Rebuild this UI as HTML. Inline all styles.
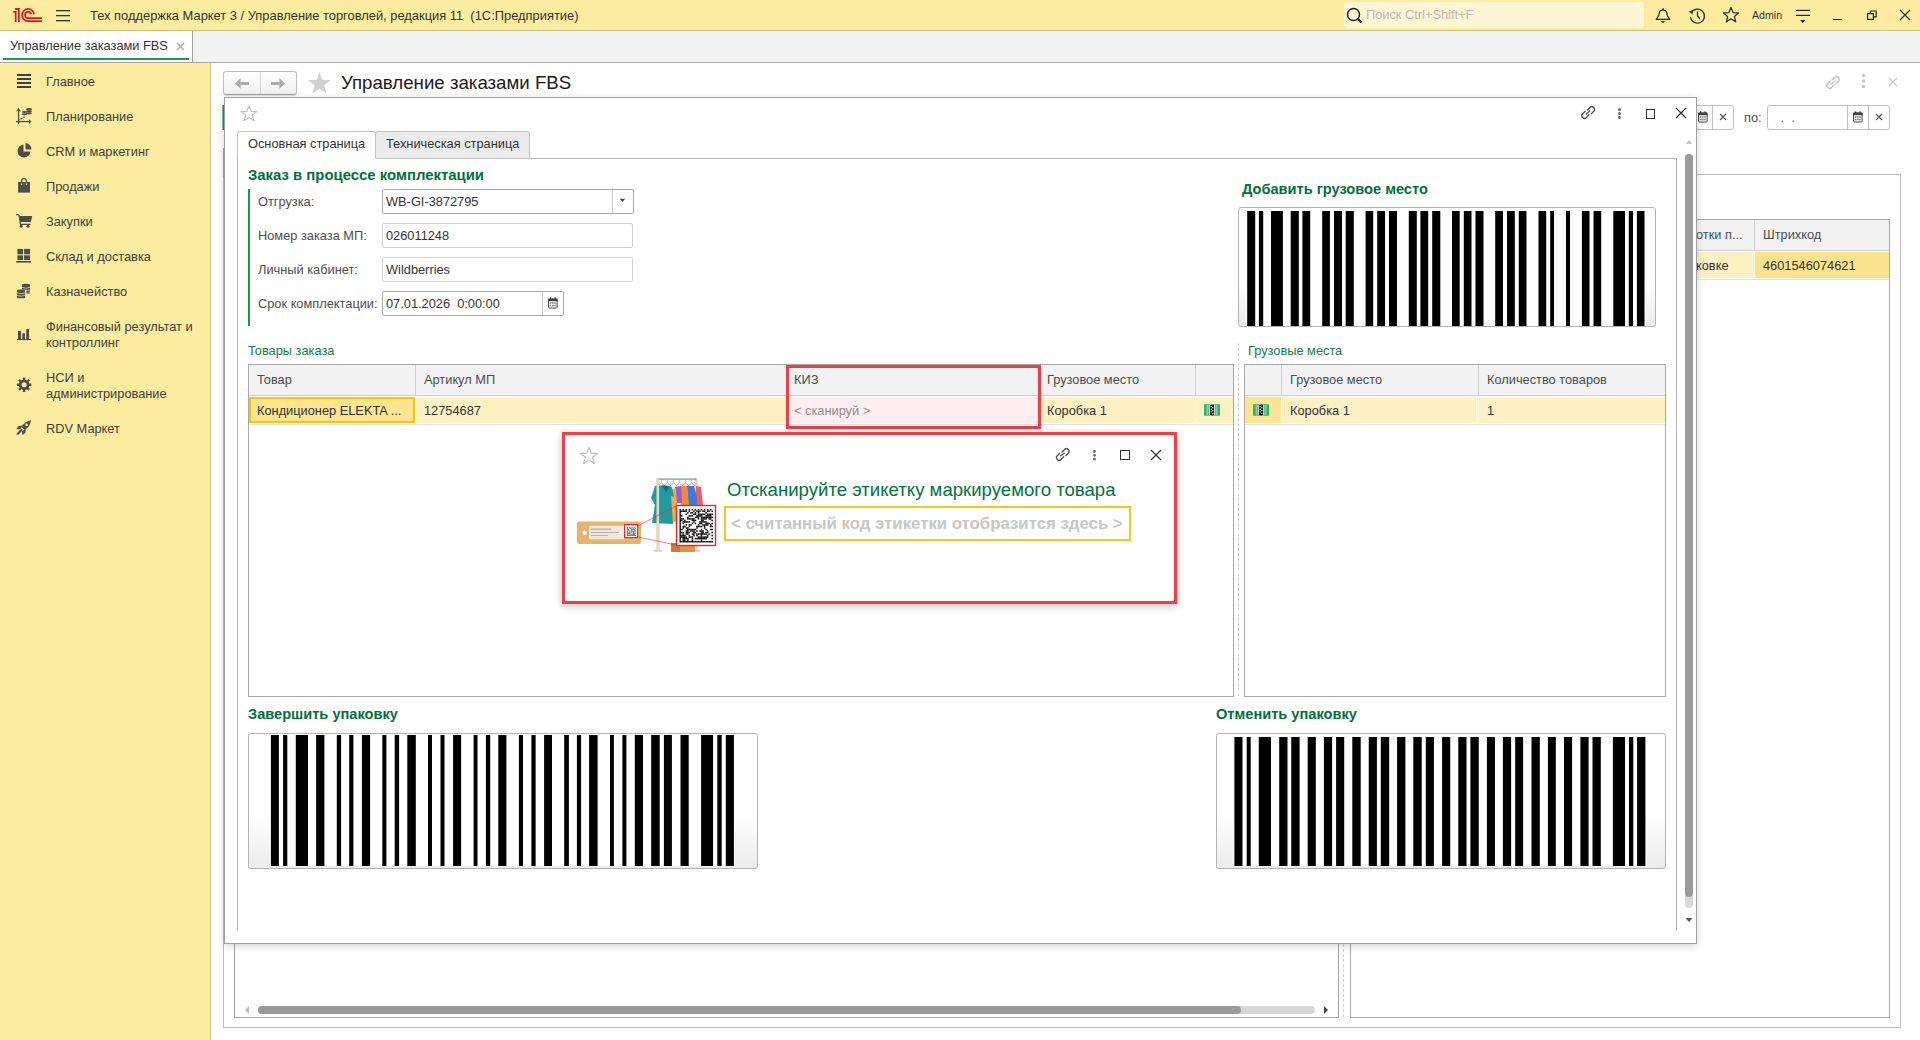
<!DOCTYPE html>
<html><head><meta charset="utf-8"><title>Управление заказами FBS</title>
<style>
*{box-sizing:border-box;margin:0;padding:0}
html,body{width:1920px;height:1040px;overflow:hidden;background:#fff}
body{position:relative;font-family:"Liberation Sans",sans-serif;font-size:12.8px;color:#4d4d4d}
.a{position:absolute}
.t{position:absolute;white-space:nowrap;line-height:16px}
</style></head><body>

<div class="a" style="left:0;top:0;width:1920px;height:31px;background:#fbec9f;border-bottom:1px solid #cdbf7a"></div>

<div class="a" style="left:0;top:31px;width:1920px;height:32px;background:#f2f2f2;border-bottom:1px solid #a8a8a8"></div>
<div class="a" style="left:0;top:31px;width:193px;height:31px;background:#fff;border-right:1px solid #a3a3a3"></div>
<div class="a" style="left:3px;top:58px;width:186px;height:2px;background:#1a9a48"></div>
<div class="t" style="left:10px;top:38px;color:#333">Управление заказами FBS</div>
<svg class="a" style="left:176px;top:42px" width="9" height="9" viewBox="0 0 9 9"><path d="M1 1 L8 8 M8 1 L1 8" stroke="#b0b0b0" stroke-width="1.6"/></svg>

<div class="a" style="left:0;top:63px;width:211px;height:977px;background:#fbec9f;border-right:1px solid #d2c585"></div>
<div class="t" style="left:46px;top:74px;color:#404040">Главное</div><div class="t" style="left:46px;top:109px;color:#404040">Планирование</div><div class="t" style="left:46px;top:144px;color:#404040">CRM и маркетинг</div><div class="t" style="left:46px;top:179px;color:#404040">Продажи</div><div class="t" style="left:46px;top:214px;color:#404040">Закупки</div><div class="t" style="left:46px;top:249px;color:#404040">Склад и доставка</div><div class="t" style="left:46px;top:284px;color:#404040">Казначейство</div><div class="t" style="left:46px;top:319px;color:#404040;line-height:16px">Финансовый результат и<br>контроллинг</div><div class="t" style="left:46px;top:370px;color:#404040;line-height:16px">НСИ и<br>администрирование</div><div class="t" style="left:46px;top:421px;color:#404040">RDV Маркет</div>
<div class="a" style="left:223px;top:174px;width:1678px;height:854px;border:1px solid #bdbdbd"></div>
<div class="a" style="left:223px;top:148px;width:1px;height:30px;background:#a8a8a8"></div>
<div class="a" style="left:223px;top:105px;width:1px;height:25px;background:#109a45;box-shadow:-0.5px 0 0 #109a45"></div>
<div class="a" style="left:234px;top:219px;width:1105px;height:799px;border:1px solid #a6a6a6"></div>
<div class="t" style="left:341px;top:72px;font-size:18.67px;line-height:22px;color:#1a1a1a">Управление заказами FBS</div>

<svg class="a" style="left:0;top:0" width="48" height="30" viewBox="0 0 48 30">
 <g fill="none" stroke="#d9161f" stroke-width="1.7">
  <path d="M13.2 11.85 H15.7 V22"/>
  <path d="M15 8.85 H18.9 V22"/>
  <path d="M34.1 14.3 A6.05 6.05 0 1 0 28.1 21.05 H41.9"/>
  <path d="M31.1 14.3 A3.08 3.08 0 1 0 28.1 18.05 H41.9"/>
 </g>
</svg>
<svg class="a" style="left:56px;top:9px" width="15" height="13" viewBox="0 0 15 13"><g fill="#333"><rect x="0" y="1" width="14" height="1.3"/><rect x="0" y="6" width="14" height="1.3"/><rect x="0" y="11" width="14" height="1.3"/></g></svg>
<div class="t" style="left:90px;top:8px;color:#333;font-size:12.9px">Тех поддержка Маркет 3 / Управление торговлей, редакция 11&nbsp; (1С:Предприятие)</div>
<div class="a" style="left:1344px;top:2px;width:300px;height:26px;background:#fdf5d3;border-radius:3px"></div>
<svg class="a" style="left:1346px;top:7px" width="18" height="18" viewBox="0 0 18 18"><circle cx="7.5" cy="7.5" r="6" fill="none" stroke="#222" stroke-width="1.5"/><path d="M11.8 11.8 L15.5 15.5" stroke="#222" stroke-width="2.2"/></svg>
<div class="t" style="left:1366px;top:7px;color:#b9b9b9;font-size:12.8px">Поиск Ctrl+Shift+F</div>
<svg class="a" style="left:1654px;top:6px" width="18" height="18" viewBox="1654 6 18 18"><path d="M1656.3 19.4 H1669.7 L1667.2 15.2 L1666.4 11.6 Q1665.8 10.1 1663 10.1 Q1660.2 10.1 1659.6 11.6 L1658.8 15.2Z" fill="none" stroke="#222" stroke-width="1.2" stroke-linejoin="round"/><circle cx="1663" cy="9.2" r="0.9" fill="#222"/><path d="M1660.5 21.2 H1665.5 L1663 22.9Z" fill="#222"/></svg>
<svg class="a" style="left:1688px;top:7px" width="18" height="18" viewBox="0 0 18 18"><path d="M3.2 6 A7 7 0 1 1 2.5 10" fill="none" stroke="#333" stroke-width="1.3"/><path d="M1 4.5 L4.5 7.5 L5 3Z" fill="#333"/><path d="M9.5 4.5 V9 L12 12" fill="none" stroke="#333" stroke-width="1.3"/></svg>
<svg class="a" style="left:1722px;top:6px" width="18" height="18" viewBox="0 0 18 18"><path d="M9 1.5 L11.1 6.6 L16.5 7 L12.4 10.5 L13.7 15.8 L9 12.9 L4.3 15.8 L5.6 10.5 L1.5 7 L6.9 6.6Z" fill="none" stroke="#333" stroke-width="1.3" stroke-linejoin="round"/></svg>
<div class="t" style="left:1752px;top:7px;color:#333;font-size:10.6px">Admin</div>
<svg class="a" style="left:1794px;top:6px" width="18" height="20" viewBox="1794 6 18 20"><g fill="#222"><rect x="1796" y="9.8" width="14" height="1.2"/><rect x="1796" y="14.8" width="14" height="1.2"/><path d="M1800 20 H1805.6 L1802.8 23.1Z"/></g></svg>
<div class="a" style="left:1833px;top:19px;width:9px;height:1.2px;background:#222"></div>
<svg class="a" style="left:1865px;top:9px" width="14" height="13" viewBox="1865 9 14 13"><g fill="none" stroke="#222" stroke-width="1.2"><rect x="1867.6" y="13.6" width="5.8" height="5.8"/><path d="M1870.4 13.6 V11 H1876.2 V16.8 H1873.4"/></g></svg>
<svg class="a" style="left:1899px;top:9px" width="12" height="12" viewBox="0 0 12 12"><path d="M1 1 L11 11 M11 1 L1 11" stroke="#333" stroke-width="1.3"/></svg>

<svg class="a" style="left:17px;top:74px" width="14" height="14" viewBox="0 0 14 14"><g fill="#3d3f46"><rect x="0" y="0" width="14" height="2"/><rect x="0" y="4" width="14" height="2"/><rect x="0" y="8" width="14" height="2"/><rect x="0" y="12" width="14" height="2"/></g></svg>
<svg class="a" style="left:15px;top:106px" width="18" height="19" viewBox="15 106 18 19"><g fill="#4d4d4d"><rect x="17.9" y="109.5" width="1.3" height="14.5"/><path d="M16.2 111.2 L18.55 108 L20.9 111.2Z"/><rect x="16" y="120.9" width="13.5" height="1.3"/><path d="M28.8 119.2 L31.6 121.55 L28.8 123.9Z"/><ellipse cx="29" cy="109.2" rx="3" ry="1.2"/><ellipse cx="29" cy="111.3" rx="3" ry="1.1"/><ellipse cx="29" cy="113.3" rx="3" ry="1.1"/><ellipse cx="24.6" cy="112" rx="2.7" ry="1.1"/><ellipse cx="24.6" cy="114.3" rx="2.7" ry="1.1"/></g><path d="M19.5 119.6 L21 118.4 L22 118.8 L23.3 117.3 L25 117.2" fill="none" stroke="#4d4d4d" stroke-width="0.9"/></svg>
<svg class="a" style="left:17px;top:143px" width="15" height="15" viewBox="0 0 15 15"><path d="M6.5 1.5 A6.5 6.5 0 1 0 13.5 8.5 H6.5Z" fill="#4d4d4d"/><path d="M8.5 0 V6.5 H14.5 A6.5 6.5 0 0 0 8.5 0Z" fill="#4d4d4d"/></svg>
<svg class="a" style="left:15px;top:176px" width="18" height="18" viewBox="15 176 18 18"><rect x="18.1" y="182" width="11.9" height="10.6" fill="#4d4d4d"/><path d="M21.6 184.5 V181 A2.4 2.4 0 0 1 26.4 181 V184.5" fill="none" stroke="#4d4d4d" stroke-width="1.3"/><rect x="20.9" y="183.4" width="1.4" height="1.4" fill="#fbec9f"/><rect x="25.7" y="183.4" width="1.4" height="1.4" fill="#fbec9f"/></svg>
<svg class="a" style="left:15px;top:212px" width="18" height="17" viewBox="15 212 18 17"><path d="M16 214.5 H18.3 L19.5 216" fill="none" stroke="#4d4d4d" stroke-width="1.2"/><path d="M18.8 216 H32.2 L30.8 222 H20.2Z" fill="#4d4d4d"/><path d="M19.2 216 L20.6 224.3 H30.5" fill="none" stroke="#4d4d4d" stroke-width="1.3"/><circle cx="21.1" cy="226.3" r="1.5" fill="#4d4d4d"/><circle cx="28" cy="226.3" r="1.5" fill="#4d4d4d"/></svg>
<svg class="a" style="left:15px;top:247px" width="18" height="17" viewBox="15 247 18 17"><g fill="#4d4d4d"><rect x="17.4" y="248.9" width="5.7" height="5.4"/><rect x="24.1" y="248.9" width="5.9" height="5.4"/><rect x="17.4" y="255.3" width="5.7" height="4.8"/><rect x="24.1" y="255.3" width="5.9" height="4.8"/><rect x="16.2" y="261" width="14.8" height="1.6"/></g></svg>
<svg class="a" style="left:15px;top:282px" width="18" height="18" viewBox="15 282 18 18"><g fill="#4d4d4d"><ellipse cx="26" cy="285" rx="4" ry="1.2"/><rect x="22" y="285" width="8" height="9" rx="1"/></g><g fill="none" stroke="#fbec9f" stroke-width="0.7"><path d="M22 287.4 Q26 289 30 287.4 M22 290 Q26 291.6 30 290 M22 292.6 Q26 294.2 30 292.6"/></g><path d="M21 289.8 H26.3 V298.3 H16.6 V291.2Z" fill="#fbec9f"/><g fill="#4d4d4d"><ellipse cx="21" cy="290.8" rx="4.1" ry="1.2"/><rect x="16.9" y="290.8" width="8.2" height="7.4" rx="1"/></g><g fill="none" stroke="#fbec9f" stroke-width="0.7"><path d="M16.9 292.9 Q21 294.5 25.1 292.9 M16.9 295.4 Q21 297 25.1 295.4"/></g></svg>
<svg class="a" style="left:15px;top:327px" width="18" height="14" viewBox="15 327 18 14"><g fill="#4d4d4d"><rect x="18" y="330.9" width="3.1" height="8.5"/><rect x="22.3" y="333.2" width="2.7" height="6.2"/><rect x="26.2" y="329.1" width="2.8" height="10.3"/><rect x="17" y="338.9" width="14" height="1.2"/></g></svg>
<svg class="a" style="left:15px;top:376px" width="18" height="18" viewBox="15 376 18 18"><g fill="#4d4d4d"><circle cx="24.1" cy="384.8" r="5.3"/><g stroke="#4d4d4d" stroke-width="2.4"><path d="M24.1 377.6 V392 M16.9 384.8 H31.3"/><path d="M19 379.7 L29.2 389.9 M29.2 379.7 L19 389.9" stroke-width="2.2"/></g></g><circle cx="24.1" cy="384.8" r="2.5" fill="#fbec9f"/></svg>
<svg class="a" style="left:15px;top:418px" width="18" height="19" viewBox="15 418 18 19"><g fill="#4d4d4d"><path d="M31.1 420.2 C27 421 23.5 423.2 21.3 426.8 L24.6 430.1 C28.2 427.9 30.4 424.4 31.1 420.2Z"/><path d="M22.3 425.6 L18.5 426.1 L16.4 429.2 L20.3 429.3Z"/><path d="M25.8 429.1 L25.3 432.9 L22.2 435 L22.1 431.1Z"/><path d="M21.4 428.6 L22.8 430 L18.6 434.6 L16.6 435.1 L17 433.1Z"/></g><circle cx="26.6" cy="424.8" r="1.3" fill="#fbec9f"/></svg>

<div class="a" style="left:223px;top:71px;width:74px;height:24px;border:1px solid #bdbdbd;border-bottom-color:#9e9e9e;border-radius:3px;background:linear-gradient(#fff,#f0f0f0);box-shadow:0 1px 1px rgba(0,0,0,.12)"></div>
<div class="a" style="left:260px;top:72px;width:1px;height:22px;background:#d5d5d5"></div>
<svg class="a" style="left:235px;top:78px" width="15" height="12" viewBox="0 0 15 12"><path d="M0 5.4 L5.6 0 V3.9 H14 V6.9 H5.6 V10.8Z" fill="#ababab"/></svg>
<svg class="a" style="left:271px;top:78px" width="15" height="12" viewBox="0 0 15 12"><path d="M14 5.4 L8.4 0 V3.9 H0 V6.9 H8.4 V10.8Z" fill="#ababab"/></svg>
<svg class="a" style="left:307px;top:71px" width="25" height="24" viewBox="0 0 25 24"><path d="M12.4 1 L15.3 9.1 H24 L17.1 14.3 L19.6 22.6 L12.4 17.4 L5.2 22.6 L7.7 14.3 L0.8 9.1 H9.5Z" fill="#cfd0d2"/></svg>
<svg class="a" style="left:1824px;top:74px" width="18" height="17" viewBox="0 0 18 17"><g fill="none" stroke="#c4c4c4" stroke-width="1.4"><path d="M7.5 6.5 L10.5 3.5 A2.6 2.6 0 0 1 14.3 7.3 L11.5 10"/><path d="M10.5 10.5 L7.5 13.5 A2.6 2.6 0 0 1 3.7 9.7 L6.5 7"/><path d="M6.8 10.2 L11.2 6.8"/></g></svg>
<svg class="a" style="left:1861px;top:73px" width="5" height="16" viewBox="0 0 5 16"><g fill="#c4c4c4"><circle cx="2.5" cy="2.5" r="1.7"/><circle cx="2.5" cy="8" r="1.7"/><circle cx="2.5" cy="13.5" r="1.7"/></g></svg>
<svg class="a" style="left:1888px;top:77px" width="10" height="10" viewBox="0 0 10 10"><path d="M1 1 L9 9 M9 1 L1 9" stroke="#c4c4c4" stroke-width="1.2"/></svg>
<div class="a" style="left:1690px;top:105px;width:44px;height:25px;border:1px solid #bfbfbf;border-radius:0 3px 3px 0;background:#fff"></div>
<div class="a" style="left:1712px;top:105px;width:1px;height:25px;background:#bfbfbf"></div>
<div class="t" style="left:1744px;top:110px;color:#4d4d4d;font-size:12.8px">по:</div>
<div class="a" style="left:1767px;top:105px;width:123px;height:25px;border:1px solid #bfbfbf;border-radius:3px;background:#fff"></div>
<div class="a" style="left:1847px;top:105px;width:1px;height:25px;background:#bfbfbf"></div>
<div class="a" style="left:1868px;top:105px;width:1px;height:25px;background:#bfbfbf"></div>
<div class="t" style="left:1777px;top:110px;color:#4d4d4d;font-size:12.8px">&nbsp;.&nbsp; .</div>
<svg class="a" style="left:1698px;top:111px" width="10" height="12" viewBox="0 0 10 12"><rect x="0.5" y="2" width="8.6" height="9" rx="0.8" fill="#fff" stroke="#444" stroke-width="1"/><rect x="0" y="1.6" width="9.6" height="2.6" fill="#444"/><rect x="2" y="0.3" width="1.3" height="2" fill="#444"/><rect x="6.3" y="0.3" width="1.3" height="2" fill="#444"/><g fill="#777"><rect x="1.8" y="5.3" width="1.6" height="1.5"/><rect x="4" y="5.3" width="1.6" height="1.5"/><rect x="6.2" y="5.3" width="1.6" height="1.5"/><rect x="1.8" y="7.8" width="1.6" height="1.5"/><rect x="4" y="7.8" width="1.6" height="1.5"/><rect x="6.2" y="7.8" width="1.6" height="1.5"/></g></svg>
<svg class="a" style="left:1853px;top:111px" width="10" height="12" viewBox="0 0 10 12"><rect x="0.5" y="2" width="8.6" height="9" rx="0.8" fill="#fff" stroke="#444" stroke-width="1"/><rect x="0" y="1.6" width="9.6" height="2.6" fill="#444"/><rect x="2" y="0.3" width="1.3" height="2" fill="#444"/><rect x="6.3" y="0.3" width="1.3" height="2" fill="#444"/><g fill="#777"><rect x="1.8" y="5.3" width="1.6" height="1.5"/><rect x="4" y="5.3" width="1.6" height="1.5"/><rect x="6.2" y="5.3" width="1.6" height="1.5"/><rect x="1.8" y="7.8" width="1.6" height="1.5"/><rect x="4" y="7.8" width="1.6" height="1.5"/><rect x="6.2" y="7.8" width="1.6" height="1.5"/></g></svg>
<svg class="a" style="left:1719px;top:113px" width="8" height="8" viewBox="0 0 8 8"><path d="M1 1 L7 7 M7 1 L1 7" stroke="#555" stroke-width="1.2"/></svg>
<svg class="a" style="left:1875px;top:113px" width="8" height="8" viewBox="0 0 8 8"><path d="M1 1 L7 7 M7 1 L1 7" stroke="#555" stroke-width="1.2"/></svg>
<div class="a" style="left:1350px;top:219px;width:540px;height:799px;border:1px solid #a6a6a6;background:#fff"></div>
<div class="a" style="left:1351px;top:220px;width:538px;height:31px;background:#f2f2f2;border-bottom:1px solid #cdcdcd"></div>
<div class="a" style="left:1351px;top:252px;width:403px;height:26px;background:#fdf1c4"></div>
<div class="a" style="left:1755px;top:252px;width:134px;height:26px;background:#fbe38e"></div>
<div class="a" style="left:1351px;top:279px;width:538px;height:1px;background:#e3e3e3"></div>
<div class="a" style="left:1754px;top:220px;width:1px;height:30px;background:#cfcfcf"></div>
<div class="t" style="left:1696px;top:227px;font-size:12.8px;color:#4d4d4d">отки п...</div>
<div class="t" style="left:1763px;top:227px;font-size:12.8px;color:#4d4d4d">Штрихкод</div>
<div class="t" style="left:1696px;top:258px;font-size:12.8px;color:#333">ковке</div>
<div class="t" style="left:1763px;top:258px;font-size:12.8px;color:#333">4601546074621</div>
<div class="a" style="left:1343px;top:220px;width:1px;height:797px;border-left:1px dashed #d0d0d0"></div>
<svg class="a" style="left:244px;top:1005px" width="6" height="10" viewBox="0 0 6 10"><path d="M5 1 L1 5 L5 9Z" fill="#bbb"/></svg>
<div class="a" style="left:258px;top:1006px;width:1057px;height:8px;border-radius:4px;background:#d6d6d6"></div>
<div class="a" style="left:258px;top:1006px;width:983px;height:8px;border-radius:4px;background:#9a9a9a"></div>
<svg class="a" style="left:1323px;top:1005px" width="6" height="10" viewBox="0 0 6 10"><path d="M1 1 L5 5 L1 9Z" fill="#444"/></svg>

<div class="a" style="left:224px;top:97px;width:1473px;height:847px;background:#fff;border:1px solid #a0a0a0;box-shadow:0 2px 8px rgba(0,0,0,.18)"></div>

<svg class="a" style="left:240px;top:105px" width="18" height="17" viewBox="0 0 18 17"><path d="M9 1 L11.1 6.4 L16.8 6.6 L12.3 10.1 L13.9 15.7 L9 12.5 L4.1 15.7 L5.7 10.1 L1.2 6.6 L6.9 6.4Z" fill="none" stroke="#bdbdbd" stroke-width="1.1" stroke-linejoin="round"/></svg>
<svg class="a" style="left:1579px;top:104px" width="18" height="17" viewBox="0 0 18 17"><g fill="none" stroke="#4d4d4d" stroke-width="1.3"><path d="M8 6.5 L11 3.5 A2.6 2.6 0 0 1 14.8 7.3 L12 10"/><path d="M10.5 10.5 L7.5 13.5 A2.6 2.6 0 0 1 3.7 9.7 L6.5 7"/><path d="M6.8 10.2 L11.2 6.8"/></g></svg>
<svg class="a" style="left:1617px;top:106px" width="5" height="15" viewBox="0 0 5 15"><g fill="#6a6a6a"><circle cx="2.5" cy="3.5" r="1.5"/><circle cx="2.5" cy="7.5" r="1.5"/><circle cx="2.5" cy="11.5" r="1.5"/></g></svg>
<div class="a" style="left:1646px;top:109px;width:9px;height:9.5px;border:1.3px solid #333"></div>
<svg class="a" style="left:1675px;top:107px" width="12" height="12" viewBox="0 0 12 12"><path d="M1 1 L11 11 M11 1 L1 11" stroke="#333" stroke-width="1.2"/></svg>
<!-- tab page frame -->
<div class="a" style="left:237px;top:158px;width:1440px;height:773px;border:1px solid #b4b4b4;border-bottom:none"></div>
<div class="a" style="left:237px;top:131px;width:139px;height:28px;background:#fff;border:1px solid #c4c4c4;border-bottom:none;border-radius:3px 3px 0 0"></div>
<div class="a" style="left:375px;top:131px;width:155px;height:28px;background:#ebebeb;border:1px solid #c4c4c4;border-radius:3px 3px 0 0"></div>
<div class="t" style="left:248px;top:136px;color:#333">Основная страница</div>
<div class="t" style="left:386px;top:136px;color:#333">Техническая страница</div>
<!-- scrollbar -->
<svg class="a" style="left:1685px;top:139px" width="8" height="6" viewBox="0 0 8 6"><path d="M0.5 5 L4 1 L7.5 5Z" fill="#c8c8c8"/></svg>
<div class="a" style="left:1685px;top:154px;width:8px;height:754px;border-radius:4px;background:#d9d9d9"></div>
<div class="a" style="left:1685px;top:154px;width:8px;height:743px;border-radius:4px;background:#9a9a9a"></div>
<svg class="a" style="left:1685px;top:917px" width="8" height="6" viewBox="0 0 8 6"><path d="M0.5 1 L4 5 L7.5 1Z" fill="#555"/></svg>

<div class="t" style="left:248px;top:166px;color:#00703c;font-weight:bold;font-size:14.9px;line-height:18px">Заказ в процессе комплектации</div>
<div class="a" style="left:248px;top:189px;width:2px;height:137px;background:#1a9a48"></div>
<div class="t" style="left:258px;top:194px">Отгрузка:</div>
<div class="t" style="left:258px;top:228px">Номер заказа МП:</div>
<div class="t" style="left:258px;top:262px">Личный кабинет:</div>
<div class="t" style="left:258px;top:296px">Срок комплектации:</div>
<div class="a" style="left:382px;top:189px;width:252px;height:25px;border:1px solid #a9a9a9;border-radius:2px;background:#fff"></div>
<div class="a" style="left:612px;top:190px;width:1px;height:23px;background:#c8c8c8"></div>
<svg class="a" style="left:619px;top:198px" width="7" height="5" viewBox="0 0 7 5"><path d="M0.8 0.8 H6.2 L3.5 4Z" fill="#444"/></svg>
<div class="a" style="left:382px;top:223px;width:251px;height:25px;border:1px solid #d0d0d0;border-radius:2px;background:#fff"></div>
<div class="a" style="left:382px;top:257px;width:251px;height:25px;border:1px solid #d0d0d0;border-radius:2px;background:#fff"></div>
<div class="a" style="left:382px;top:291px;width:182px;height:25px;border:1px solid #a9a9a9;border-radius:2px;background:#fff"></div>
<div class="a" style="left:542px;top:292px;width:1px;height:23px;background:#c8c8c8"></div>
<svg class="a" style="left:548px;top:297px" width="10" height="12" viewBox="0 0 10 12"><rect x="0.5" y="2" width="8.6" height="9" rx="0.8" fill="#fff" stroke="#444" stroke-width="1"/><rect x="0" y="1.6" width="9.6" height="2.6" fill="#444"/><rect x="2" y="0.3" width="1.3" height="2" fill="#444"/><rect x="6.3" y="0.3" width="1.3" height="2" fill="#444"/><g fill="#777"><rect x="1.8" y="5.3" width="1.6" height="1.5"/><rect x="4" y="5.3" width="1.6" height="1.5"/><rect x="6.2" y="5.3" width="1.6" height="1.5"/><rect x="1.8" y="7.8" width="1.6" height="1.5"/><rect x="4" y="7.8" width="1.6" height="1.5"/><rect x="6.2" y="7.8" width="1.6" height="1.5"/></g></svg>
<div class="t" style="left:386px;top:194px;color:#333">WB-GI-3872795</div>
<div class="t" style="left:386px;top:228px;color:#333">026011248</div>
<div class="t" style="left:386px;top:262px;color:#333">Wildberries</div>
<div class="t" style="left:386px;top:296px;color:#333">07.01.2026&nbsp; 0:00:00</div>

<div class="t" style="left:1242px;top:180px;color:#00703c;font-weight:bold;font-size:14.6px;line-height:18px">Добавить грузовое место</div>
<div class="a" style="left:1238px;top:207px;width:418px;height:120px;border:1px solid #b4b4b4;border-radius:3px;background:linear-gradient(to bottom,#fff 60%,#ececec)"></div>
<svg class="a" style="left:1238px;top:207px" width="418" height="120" viewBox="0 0 418 120"><rect x="8.20" y="4.00" width="399.30" height="115.00" fill="#fff"/><g fill="#000"><rect x="9.20" y="4.00" width="8.00" height="115.00"/><rect x="20.90" y="4.00" width="4.30" height="115.00"/><rect x="33.00" y="4.00" width="11.90" height="115.00"/><rect x="52.70" y="4.00" width="8.10" height="115.00"/><rect x="64.40" y="4.00" width="7.80" height="115.00"/><rect x="84.20" y="4.00" width="7.70" height="115.00"/><rect x="96.00" y="4.00" width="8.00" height="115.00"/><rect x="107.70" y="4.00" width="8.10" height="115.00"/><rect x="127.60" y="4.00" width="7.60" height="115.00"/><rect x="139.20" y="4.00" width="7.80" height="115.00"/><rect x="151.00" y="4.00" width="8.00" height="115.00"/><rect x="170.80" y="4.00" width="8.00" height="115.00"/><rect x="182.40" y="4.00" width="7.80" height="115.00"/><rect x="194.20" y="4.00" width="8.10" height="115.00"/><rect x="214.00" y="4.00" width="7.70" height="115.00"/><rect x="225.80" y="4.00" width="7.70" height="115.00"/><rect x="237.50" y="4.00" width="8.00" height="115.00"/><rect x="257.20" y="4.00" width="7.80" height="115.00"/><rect x="269.00" y="4.00" width="7.80" height="115.00"/><rect x="280.80" y="4.00" width="7.70" height="115.00"/><rect x="300.50" y="4.00" width="7.70" height="115.00"/><rect x="312.20" y="4.00" width="3.80" height="115.00"/><rect x="328.00" y="4.00" width="4.00" height="115.00"/><rect x="343.90" y="4.00" width="7.60" height="115.00"/><rect x="355.50" y="4.00" width="7.70" height="115.00"/><rect x="375.30" y="4.00" width="11.70" height="115.00"/><rect x="390.80" y="4.00" width="4.20" height="115.00"/><rect x="398.90" y="4.00" width="7.60" height="115.00"/></g></svg>
<div class="t" style="left:248px;top:343px;color:#197a48">Товары заказа</div>
<div class="a" style="left:248px;top:364px;width:986px;height:333px;border:1px solid #a9a9a9;background:#fff"></div>
<div class="a" style="left:249px;top:365px;width:984px;height:30px;background:#f2f2f2"></div>
<div class="a" style="left:249px;top:395px;width:984px;height:1px;background:#cdcdcd"></div>
<div class="a" style="left:249px;top:397px;width:984px;height:26px;background:#fdf1c4"></div>
<div class="a" style="left:249px;top:424px;width:984px;height:1px;background:#e3e3e3"></div>
<div class="a" style="left:249px;top:397px;width:166px;height:26px;background:#fde591;border:2px solid #f7c40f"></div>
<div class="a" style="left:415px;top:397px;width:1px;height:26px;background:#fff"></div>
<div class="a" style="left:786px;top:397px;width:253px;height:26px;background:#ffeef0"></div>
<div class="a" style="left:1195px;top:397px;width:1px;height:26px;background:#fff"></div>
<div class="a" style="left:415px;top:365px;width:1px;height:30px;background:#cfcfcf"></div>
<div class="a" style="left:1038px;top:365px;width:1px;height:30px;background:#cfcfcf"></div>
<div class="a" style="left:1195px;top:365px;width:1px;height:30px;background:#cfcfcf"></div>
<div class="t" style="left:257px;top:372px">Товар</div>
<div class="t" style="left:424px;top:372px">Артикул МП</div>
<div class="t" style="left:794px;top:372px">КИЗ</div>
<div class="t" style="left:1047px;top:372px">Грузовое место</div>
<div class="t" style="left:257px;top:403px;color:#333">Кондиционер ELEKTA ...</div>
<div class="t" style="left:424px;top:403px;color:#333">12754687</div>
<div class="t" style="left:794px;top:403px;color:#8c8c8c">&lt; сканируй &gt;</div>
<div class="t" style="left:1047px;top:403px;color:#333">Коробка 1</div>
<svg class="a" style="left:1204px;top:404px" width="16" height="12" viewBox="0 0 16 12"><path d="M0 0.6 L1 0 L2 0.6 L3 0 L4 0.6 L5 0 L6 0.6 L7 0 L8 0.6 L9 0 L10 0.6 L11 0 L12 0.6 L13 0 L14 0.6 L15 0 L16 0.6 V11.4 L15 12 L14 11.4 L13 12 L12 11.4 L11 12 L10 11.4 L9 12 L8 11.4 L7 12 L6 11.4 L5 12 L4 11.4 L3 12 L2 11.4 L1 12 L0 11.4Z" fill="#2eb36a"/><rect x="2.5" y="1" width="2" height="10" fill="#7dd3a2"/><rect x="11.5" y="1" width="2" height="10" fill="#7dd3a2"/><rect x="5" y="0.8" width="6" height="10.4" fill="#fff"/><rect x="5.8" y="0.8" width="4.4" height="10.4" fill="#111"/><g fill="#fff"><rect x="6.6" y="2" width="1.2" height="1.2"/><rect x="8.2" y="3.2" width="1.2" height="1.2"/><rect x="6.6" y="4.6" width="1.2" height="1.2"/><rect x="8.2" y="6" width="1.2" height="1.2"/><rect x="6.6" y="7.4" width="1.2" height="1.2"/><rect x="8.2" y="8.8" width="1.2" height="1.2"/></g></svg>
<div class="a" style="left:786px;top:365px;width:255px;height:64px;border:3px solid #ef3e46"></div>
<div class="a" style="left:1238px;top:343px;width:1px;height:353px;border-left:1px dashed #cfcfcf"></div>
<div class="t" style="left:1248px;top:343px;color:#197a48">Грузовые места</div>
<div class="a" style="left:1244px;top:364px;width:422px;height:333px;border:1px solid #a9a9a9;background:#fff"></div>
<div class="a" style="left:1245px;top:365px;width:420px;height:30px;background:#f2f2f2"></div>
<div class="a" style="left:1245px;top:395px;width:420px;height:1px;background:#cdcdcd"></div>
<div class="a" style="left:1245px;top:397px;width:420px;height:26px;background:#fdf1c4"></div>
<div class="a" style="left:1245px;top:397px;width:36px;height:26px;background:#fde591"></div>
<div class="a" style="left:1245px;top:424px;width:420px;height:1px;background:#e3e3e3"></div>
<div class="a" style="left:1281px;top:365px;width:1px;height:30px;background:#cfcfcf"></div>
<div class="a" style="left:1478px;top:365px;width:1px;height:30px;background:#cfcfcf"></div>
<div class="a" style="left:1281px;top:397px;width:1px;height:26px;background:#fff"></div>
<div class="a" style="left:1478px;top:397px;width:1px;height:26px;background:#fff"></div>
<div class="t" style="left:1290px;top:372px">Грузовое место</div>
<div class="t" style="left:1487px;top:372px">Количество товаров</div>
<div class="t" style="left:1290px;top:403px;color:#333">Коробка 1</div>
<div class="t" style="left:1487px;top:403px;color:#333">1</div>
<svg class="a" style="left:1253px;top:404px" width="16" height="12" viewBox="0 0 16 12"><path d="M0 0.6 L1 0 L2 0.6 L3 0 L4 0.6 L5 0 L6 0.6 L7 0 L8 0.6 L9 0 L10 0.6 L11 0 L12 0.6 L13 0 L14 0.6 L15 0 L16 0.6 V11.4 L15 12 L14 11.4 L13 12 L12 11.4 L11 12 L10 11.4 L9 12 L8 11.4 L7 12 L6 11.4 L5 12 L4 11.4 L3 12 L2 11.4 L1 12 L0 11.4Z" fill="#2eb36a"/><rect x="2.5" y="1" width="2" height="10" fill="#7dd3a2"/><rect x="11.5" y="1" width="2" height="10" fill="#7dd3a2"/><rect x="5" y="0.8" width="6" height="10.4" fill="#fff"/><rect x="5.8" y="0.8" width="4.4" height="10.4" fill="#111"/><g fill="#fff"><rect x="6.6" y="2" width="1.2" height="1.2"/><rect x="8.2" y="3.2" width="1.2" height="1.2"/><rect x="6.6" y="4.6" width="1.2" height="1.2"/><rect x="8.2" y="6" width="1.2" height="1.2"/><rect x="6.6" y="7.4" width="1.2" height="1.2"/><rect x="8.2" y="8.8" width="1.2" height="1.2"/></g></svg>

<div class="t" style="left:248px;top:705px;color:#00703c;font-weight:bold;font-size:14.6px;line-height:18px">Завершить упаковку</div>
<div class="a" style="left:248px;top:733px;width:510px;height:136px;border:1px solid #b4b4b4;border-radius:3px;background:linear-gradient(to bottom,#fff 60%,#ececec)"></div>
<div class="t" style="left:1216px;top:705px;color:#00703c;font-weight:bold;font-size:14.6px;line-height:18px">Отменить упаковку</div>
<div class="a" style="left:1216px;top:733px;width:450px;height:136px;border:1px solid #b4b4b4;border-radius:3px;background:linear-gradient(to bottom,#fff 60%,#ececec)"></div>
<svg class="a" style="left:248px;top:733px" width="510" height="136" viewBox="0 0 510 136"><rect x="21.90" y="2.00" width="465.00" height="131.00" fill="#fff"/><g fill="#000"><rect x="22.90" y="2.00" width="8.00" height="131.00"/><rect x="35.10" y="2.00" width="4.20" height="131.00"/><rect x="47.80" y="2.00" width="12.20" height="131.00"/><rect x="68.10" y="2.00" width="8.30" height="131.00"/><rect x="88.80" y="2.00" width="4.30" height="131.00"/><rect x="101.20" y="2.00" width="4.20" height="131.00"/><rect x="113.90" y="2.00" width="8.20" height="131.00"/><rect x="134.30" y="2.00" width="4.10" height="131.00"/><rect x="146.70" y="2.00" width="4.40" height="131.00"/><rect x="159.30" y="2.00" width="8.50" height="131.00"/><rect x="180.00" y="2.00" width="4.00" height="131.00"/><rect x="192.50" y="2.00" width="4.00" height="131.00"/><rect x="205.10" y="2.00" width="8.00" height="131.00"/><rect x="225.60" y="2.00" width="3.90" height="131.00"/><rect x="237.90" y="2.00" width="4.30" height="131.00"/><rect x="250.30" y="2.00" width="8.10" height="131.00"/><rect x="270.90" y="2.00" width="4.10" height="131.00"/><rect x="283.40" y="2.00" width="4.20" height="131.00"/><rect x="296.10" y="2.00" width="7.90" height="131.00"/><rect x="316.20" y="2.00" width="4.70" height="131.00"/><rect x="328.90" y="2.00" width="4.20" height="131.00"/><rect x="341.10" y="2.00" width="8.50" height="131.00"/><rect x="362.00" y="2.00" width="3.90" height="131.00"/><rect x="374.40" y="2.00" width="4.00" height="131.00"/><rect x="386.80" y="2.00" width="8.20" height="131.00"/><rect x="403.20" y="2.00" width="8.50" height="131.00"/><rect x="415.90" y="2.00" width="8.00" height="131.00"/><rect x="432.50" y="2.00" width="8.20" height="131.00"/><rect x="453.10" y="2.00" width="12.00" height="131.00"/><rect x="469.30" y="2.00" width="4.40" height="131.00"/><rect x="477.80" y="2.00" width="8.10" height="131.00"/></g></svg><svg class="a" style="left:1216px;top:733px" width="450" height="136" viewBox="0 0 450 136"><rect x="17.40" y="4.00" width="413.00" height="129.00" fill="#fff"/><g fill="#000"><rect x="18.40" y="4.00" width="8.10" height="129.00"/><rect x="30.70" y="4.00" width="4.00" height="129.00"/><rect x="42.75" y="4.00" width="12.25" height="129.00"/><rect x="63.20" y="4.00" width="8.30" height="129.00"/><rect x="75.25" y="4.00" width="8.35" height="129.00"/><rect x="91.70" y="4.00" width="8.10" height="129.00"/><rect x="107.90" y="4.00" width="8.20" height="129.00"/><rect x="120.10" y="4.00" width="8.10" height="129.00"/><rect x="136.30" y="4.00" width="8.40" height="129.00"/><rect x="152.75" y="4.00" width="8.15" height="129.00"/><rect x="164.80" y="4.00" width="8.40" height="129.00"/><rect x="181.10" y="4.00" width="8.30" height="129.00"/><rect x="197.30" y="4.00" width="8.40" height="129.00"/><rect x="209.80" y="4.00" width="8.10" height="129.00"/><rect x="226.10" y="4.00" width="8.15" height="129.00"/><rect x="242.30" y="4.00" width="8.20" height="129.00"/><rect x="254.40" y="4.00" width="8.35" height="129.00"/><rect x="270.90" y="4.00" width="8.10" height="129.00"/><rect x="286.90" y="4.00" width="8.20" height="129.00"/><rect x="299.20" y="4.00" width="7.90" height="129.00"/><rect x="315.50" y="4.00" width="8.30" height="129.00"/><rect x="331.90" y="4.00" width="7.90" height="129.00"/><rect x="348.00" y="4.00" width="8.10" height="129.00"/><rect x="364.40" y="4.00" width="8.20" height="129.00"/><rect x="376.50" y="4.00" width="8.30" height="129.00"/><rect x="396.90" y="4.00" width="12.10" height="129.00"/><rect x="413.00" y="4.00" width="4.30" height="129.00"/><rect x="421.10" y="4.00" width="8.30" height="129.00"/></g></svg>
<div class="a" style="left:562px;top:432px;width:615px;height:172px;background:#fff;border:3px solid #ef3e46;box-shadow:0 2px 8px rgba(0,0,0,.25)"></div>
<svg class="a" style="left:579px;top:446px" width="20" height="19" viewBox="0 0 20 19"><path d="M10 1.3 L12.3 7.2 L18.6 7.4 L13.6 11.3 L15.4 17.5 L10 13.9 L4.6 17.5 L6.4 11.3 L1.4 7.4 L7.7 7.2Z" fill="none" stroke="#bdbdbd" stroke-width="1.1" stroke-linejoin="round"/></svg>
<svg class="a" style="left:1054px;top:446px" width="17" height="17" viewBox="0 0 17 17"><g fill="none" stroke="#4d4d4d" stroke-width="1.3"><path d="M7.5 6.5 L10.5 3.5 A2.6 2.6 0 0 1 14.3 7.3 L11.5 10"/><path d="M10 10.5 L7 13.5 A2.6 2.6 0 0 1 3.2 9.7 L6 7"/><path d="M6.3 10.2 L10.7 6.8"/></g></svg>
<svg class="a" style="left:1092px;top:448px" width="5" height="15" viewBox="0 0 5 15"><g fill="#6a6a6a"><circle cx="2.5" cy="3.4" r="1.4"/><circle cx="2.5" cy="7.3" r="1.4"/><circle cx="2.5" cy="11.2" r="1.4"/></g></svg>
<div class="a" style="left:1120px;top:450px;width:10px;height:10px;border:1.3px solid #333"></div>
<svg class="a" style="left:1150px;top:449px" width="12" height="12" viewBox="0 0 12 12"><path d="M1 1 L11 11 M11 1 L1 11" stroke="#333" stroke-width="1.3"/></svg>
<div class="t" style="left:727px;top:479px;color:#00733b;font-size:18.6px;line-height:22px">Отсканируйте этикетку маркируемого товара</div>
<div class="a" style="left:724px;top:506px;width:407px;height:35px;border:2.5px solid #f7c61c;background:#fff"></div>
<div class="t" style="left:731px;top:514px;color:#c6c6c6;font-weight:bold;font-size:16.8px;line-height:20px">&lt; считанный код этикетки отобразится здесь &gt;</div>
<svg class="a" style="left:576px;top:476px" width="142" height="78" viewBox="576 476 142 78">
 <!-- rack -->
 <rect x="656.5" y="478" width="3" height="73" fill="#e3cfb8"/>
 <rect x="694.6" y="478" width="3" height="73" fill="#e3cfb8"/>
 <rect x="654" y="550" width="8" height="1.6" fill="#d9c4ac"/>
 <rect x="692" y="550" width="8" height="1.6" fill="#d9c4ac"/>
 <rect x="658" y="478.5" width="38" height="1.2" fill="#7b93a6"/>
 <g fill="none" stroke="#7b93a6" stroke-width="0.6">
  <path d="M662 479.5 q-1 2 -0.5 3 M668 479.5 q-1 2 -0.5 3 M674 479.5 q-1 2 -0.5 3 M680 479.5 q-1 2 -0.5 3 M686 479.5 q-1 2 -0.5 3 M692 479.5 q-1 2 -0.5 3"/>
 </g>
 <g fill="none" stroke="#d98a70" stroke-width="0.9">
  <path d="M658 486 l3.5 -3 l3.5 3 M664 486 l3.5 -3 l3.5 3 M670 486 l3.5 -3 l3.5 3 M676 486 l3.5 -3 l3.5 3 M682 486 l3.5 -3 l3.5 3 M688 486 l3.5 -3 l3.5 3"/>
 </g>
 <path d="M696 486 L701 487 L703 505 L696 505Z" fill="#f25c6a"/>
 <path d="M687 486 L694 486 L697 497 L697 505 L688 505Z" fill="#3e7bd6"/>
 <path d="M681 486 L687 486 L689 505 L682 522 L680 522Z" fill="#f28a3a"/>
 <path d="M675 487 L681 486 L682 503 L676 503Z" fill="#9a5bd6"/>
 <path d="M670 490 L676 488 L678 520 L671 524Z" fill="#f2a94a"/>
 <path d="M655 486 L665 485 L672 487 L674 497 L671 496 L673 524 L652 523 L655 505 L651 498Z" fill="#1f9aa0"/>
 <path d="M662 486 L666 492 L670 486Z" fill="#146e78"/>
 <rect x="656.5" y="478" width="2.6" height="73" fill="#e8d6c2"/>
 <rect x="671" y="543" width="24" height="9" fill="#d9944a"/>
 <rect x="671" y="543" width="9" height="9" fill="#c97c35"/>
 <!-- tag -->
 <rect x="577" y="521.5" width="64" height="22.5" rx="2" fill="#e5b46f"/>
 <circle cx="584.7" cy="532.7" r="2.2" fill="#fff"/>
 <rect x="589" y="525.8" width="36" height="13.4" rx="1.5" fill="#f1e9de"/>
 <rect x="591" y="528.5" width="20" height="1.5" fill="#b9b0a5"/>
 <rect x="591" y="532" width="28" height="1" fill="#b9b0a5"/>
 <rect x="591" y="535" width="17" height="1" fill="#b9b0a5"/>
 <rect x="624.6" y="524.6" width="13" height="13" fill="#fff" stroke="#f0232d" stroke-width="1.2"/>
 <g fill="#555" transform="translate(627,527)"><rect x="0.00" y="0.00" width="0.90" height="0.90"/><rect x="1.80" y="0.00" width="0.90" height="0.90"/><rect x="3.60" y="0.00" width="0.90" height="0.90"/><rect x="5.40" y="0.00" width="0.90" height="0.90"/><rect x="7.20" y="0.00" width="0.90" height="0.90"/><rect x="0.00" y="0.90" width="0.90" height="0.90"/><rect x="2.70" y="0.90" width="0.90" height="0.90"/><rect x="3.60" y="0.90" width="0.90" height="0.90"/><rect x="4.50" y="0.90" width="0.90" height="0.90"/><rect x="6.30" y="0.90" width="0.90" height="0.90"/><rect x="8.10" y="0.90" width="0.90" height="0.90"/><rect x="0.00" y="1.80" width="0.90" height="0.90"/><rect x="0.90" y="1.80" width="0.90" height="0.90"/><rect x="4.50" y="1.80" width="0.90" height="0.90"/><rect x="5.40" y="1.80" width="0.90" height="0.90"/><rect x="6.30" y="1.80" width="0.90" height="0.90"/><rect x="7.20" y="1.80" width="0.90" height="0.90"/><rect x="0.00" y="2.70" width="0.90" height="0.90"/><rect x="0.90" y="2.70" width="0.90" height="0.90"/><rect x="3.60" y="2.70" width="0.90" height="0.90"/><rect x="4.50" y="2.70" width="0.90" height="0.90"/><rect x="7.20" y="2.70" width="0.90" height="0.90"/><rect x="8.10" y="2.70" width="0.90" height="0.90"/><rect x="0.00" y="3.60" width="0.90" height="0.90"/><rect x="1.80" y="3.60" width="0.90" height="0.90"/><rect x="3.60" y="3.60" width="0.90" height="0.90"/><rect x="4.50" y="3.60" width="0.90" height="0.90"/><rect x="6.30" y="3.60" width="0.90" height="0.90"/><rect x="0.00" y="4.50" width="0.90" height="0.90"/><rect x="1.80" y="4.50" width="0.90" height="0.90"/><rect x="3.60" y="4.50" width="0.90" height="0.90"/><rect x="4.50" y="4.50" width="0.90" height="0.90"/><rect x="5.40" y="4.50" width="0.90" height="0.90"/><rect x="6.30" y="4.50" width="0.90" height="0.90"/><rect x="7.20" y="4.50" width="0.90" height="0.90"/><rect x="8.10" y="4.50" width="0.90" height="0.90"/><rect x="0.00" y="5.40" width="0.90" height="0.90"/><rect x="0.90" y="5.40" width="0.90" height="0.90"/><rect x="1.80" y="5.40" width="0.90" height="0.90"/><rect x="3.60" y="5.40" width="0.90" height="0.90"/><rect x="6.30" y="5.40" width="0.90" height="0.90"/><rect x="0.00" y="6.30" width="0.90" height="0.90"/><rect x="0.90" y="6.30" width="0.90" height="0.90"/><rect x="1.80" y="6.30" width="0.90" height="0.90"/><rect x="2.70" y="6.30" width="0.90" height="0.90"/><rect x="5.40" y="6.30" width="0.90" height="0.90"/><rect x="6.30" y="6.30" width="0.90" height="0.90"/><rect x="7.20" y="6.30" width="0.90" height="0.90"/><rect x="8.10" y="6.30" width="0.90" height="0.90"/><rect x="0.00" y="7.20" width="0.90" height="0.90"/><rect x="1.80" y="7.20" width="0.90" height="0.90"/><rect x="3.60" y="7.20" width="0.90" height="0.90"/><rect x="4.50" y="7.20" width="0.90" height="0.90"/><rect x="5.40" y="7.20" width="0.90" height="0.90"/><rect x="6.30" y="7.20" width="0.90" height="0.90"/><rect x="7.20" y="7.20" width="0.90" height="0.90"/><rect x="0.00" y="8.10" width="0.90" height="0.90"/><rect x="0.90" y="8.10" width="0.90" height="0.90"/><rect x="1.80" y="8.10" width="0.90" height="0.90"/><rect x="2.70" y="8.10" width="0.90" height="0.90"/><rect x="3.60" y="8.10" width="0.90" height="0.90"/><rect x="4.50" y="8.10" width="0.90" height="0.90"/><rect x="5.40" y="8.10" width="0.90" height="0.90"/><rect x="6.30" y="8.10" width="0.90" height="0.90"/><rect x="7.20" y="8.10" width="0.90" height="0.90"/><rect x="8.10" y="8.10" width="0.90" height="0.90"/></g>
 <path d="M638 526 L676 506 M638 537 L676 545" stroke="#f0232d" stroke-width="0.6" fill="none"/>
 <rect x="676.5" y="505.5" width="39" height="40" fill="#fff" stroke="#f0232d" stroke-width="1.4"/>
 <g fill="#000" transform="translate(679.5,509)"><rect x="0.00" y="0.00" width="1.52" height="1.52"/><rect x="3.04" y="0.00" width="1.52" height="1.52"/><rect x="6.08" y="0.00" width="1.52" height="1.52"/><rect x="9.12" y="0.00" width="1.52" height="1.52"/><rect x="12.16" y="0.00" width="1.52" height="1.52"/><rect x="15.20" y="0.00" width="1.52" height="1.52"/><rect x="18.24" y="0.00" width="1.52" height="1.52"/><rect x="21.28" y="0.00" width="1.52" height="1.52"/><rect x="24.32" y="0.00" width="1.52" height="1.52"/><rect x="27.36" y="0.00" width="1.52" height="1.52"/><rect x="30.40" y="0.00" width="1.52" height="1.52"/><rect x="0.00" y="1.52" width="1.52" height="1.52"/><rect x="1.52" y="1.52" width="1.52" height="1.52"/><rect x="3.04" y="1.52" width="1.52" height="1.52"/><rect x="4.56" y="1.52" width="1.52" height="1.52"/><rect x="6.08" y="1.52" width="1.52" height="1.52"/><rect x="9.12" y="1.52" width="1.52" height="1.52"/><rect x="13.68" y="1.52" width="1.52" height="1.52"/><rect x="16.72" y="1.52" width="1.52" height="1.52"/><rect x="18.24" y="1.52" width="1.52" height="1.52"/><rect x="19.76" y="1.52" width="1.52" height="1.52"/><rect x="22.80" y="1.52" width="1.52" height="1.52"/><rect x="24.32" y="1.52" width="1.52" height="1.52"/><rect x="27.36" y="1.52" width="1.52" height="1.52"/><rect x="28.88" y="1.52" width="1.52" height="1.52"/><rect x="31.92" y="1.52" width="1.52" height="1.52"/><rect x="0.00" y="3.04" width="1.52" height="1.52"/><rect x="7.60" y="3.04" width="1.52" height="1.52"/><rect x="10.64" y="3.04" width="1.52" height="1.52"/><rect x="12.16" y="3.04" width="1.52" height="1.52"/><rect x="15.20" y="3.04" width="1.52" height="1.52"/><rect x="18.24" y="3.04" width="1.52" height="1.52"/><rect x="25.84" y="3.04" width="1.52" height="1.52"/><rect x="0.00" y="4.56" width="1.52" height="1.52"/><rect x="6.08" y="4.56" width="1.52" height="1.52"/><rect x="13.68" y="4.56" width="1.52" height="1.52"/><rect x="15.20" y="4.56" width="1.52" height="1.52"/><rect x="18.24" y="4.56" width="1.52" height="1.52"/><rect x="19.76" y="4.56" width="1.52" height="1.52"/><rect x="21.28" y="4.56" width="1.52" height="1.52"/><rect x="22.80" y="4.56" width="1.52" height="1.52"/><rect x="24.32" y="4.56" width="1.52" height="1.52"/><rect x="27.36" y="4.56" width="1.52" height="1.52"/><rect x="28.88" y="4.56" width="1.52" height="1.52"/><rect x="30.40" y="4.56" width="1.52" height="1.52"/><rect x="31.92" y="4.56" width="1.52" height="1.52"/><rect x="0.00" y="6.08" width="1.52" height="1.52"/><rect x="1.52" y="6.08" width="1.52" height="1.52"/><rect x="9.12" y="6.08" width="1.52" height="1.52"/><rect x="10.64" y="6.08" width="1.52" height="1.52"/><rect x="12.16" y="6.08" width="1.52" height="1.52"/><rect x="16.72" y="6.08" width="1.52" height="1.52"/><rect x="18.24" y="6.08" width="1.52" height="1.52"/><rect x="19.76" y="6.08" width="1.52" height="1.52"/><rect x="21.28" y="6.08" width="1.52" height="1.52"/><rect x="25.84" y="6.08" width="1.52" height="1.52"/><rect x="27.36" y="6.08" width="1.52" height="1.52"/><rect x="28.88" y="6.08" width="1.52" height="1.52"/><rect x="30.40" y="6.08" width="1.52" height="1.52"/><rect x="0.00" y="7.60" width="1.52" height="1.52"/><rect x="7.60" y="7.60" width="1.52" height="1.52"/><rect x="15.20" y="7.60" width="1.52" height="1.52"/><rect x="16.72" y="7.60" width="1.52" height="1.52"/><rect x="18.24" y="7.60" width="1.52" height="1.52"/><rect x="21.28" y="7.60" width="1.52" height="1.52"/><rect x="22.80" y="7.60" width="1.52" height="1.52"/><rect x="24.32" y="7.60" width="1.52" height="1.52"/><rect x="25.84" y="7.60" width="1.52" height="1.52"/><rect x="27.36" y="7.60" width="1.52" height="1.52"/><rect x="28.88" y="7.60" width="1.52" height="1.52"/><rect x="30.40" y="7.60" width="1.52" height="1.52"/><rect x="31.92" y="7.60" width="1.52" height="1.52"/><rect x="0.00" y="9.12" width="1.52" height="1.52"/><rect x="1.52" y="9.12" width="1.52" height="1.52"/><rect x="3.04" y="9.12" width="1.52" height="1.52"/><rect x="7.60" y="9.12" width="1.52" height="1.52"/><rect x="9.12" y="9.12" width="1.52" height="1.52"/><rect x="10.64" y="9.12" width="1.52" height="1.52"/><rect x="12.16" y="9.12" width="1.52" height="1.52"/><rect x="13.68" y="9.12" width="1.52" height="1.52"/><rect x="18.24" y="9.12" width="1.52" height="1.52"/><rect x="21.28" y="9.12" width="1.52" height="1.52"/><rect x="22.80" y="9.12" width="1.52" height="1.52"/><rect x="24.32" y="9.12" width="1.52" height="1.52"/><rect x="25.84" y="9.12" width="1.52" height="1.52"/><rect x="28.88" y="9.12" width="1.52" height="1.52"/><rect x="30.40" y="9.12" width="1.52" height="1.52"/><rect x="0.00" y="10.64" width="1.52" height="1.52"/><rect x="1.52" y="10.64" width="1.52" height="1.52"/><rect x="4.56" y="10.64" width="1.52" height="1.52"/><rect x="12.16" y="10.64" width="1.52" height="1.52"/><rect x="13.68" y="10.64" width="1.52" height="1.52"/><rect x="15.20" y="10.64" width="1.52" height="1.52"/><rect x="21.28" y="10.64" width="1.52" height="1.52"/><rect x="22.80" y="10.64" width="1.52" height="1.52"/><rect x="31.92" y="10.64" width="1.52" height="1.52"/><rect x="0.00" y="12.16" width="1.52" height="1.52"/><rect x="3.04" y="12.16" width="1.52" height="1.52"/><rect x="4.56" y="12.16" width="1.52" height="1.52"/><rect x="6.08" y="12.16" width="1.52" height="1.52"/><rect x="7.60" y="12.16" width="1.52" height="1.52"/><rect x="9.12" y="12.16" width="1.52" height="1.52"/><rect x="13.68" y="12.16" width="1.52" height="1.52"/><rect x="19.76" y="12.16" width="1.52" height="1.52"/><rect x="21.28" y="12.16" width="1.52" height="1.52"/><rect x="22.80" y="12.16" width="1.52" height="1.52"/><rect x="24.32" y="12.16" width="1.52" height="1.52"/><rect x="25.84" y="12.16" width="1.52" height="1.52"/><rect x="0.00" y="13.68" width="1.52" height="1.52"/><rect x="3.04" y="13.68" width="1.52" height="1.52"/><rect x="12.16" y="13.68" width="1.52" height="1.52"/><rect x="15.20" y="13.68" width="1.52" height="1.52"/><rect x="19.76" y="13.68" width="1.52" height="1.52"/><rect x="21.28" y="13.68" width="1.52" height="1.52"/><rect x="25.84" y="13.68" width="1.52" height="1.52"/><rect x="27.36" y="13.68" width="1.52" height="1.52"/><rect x="28.88" y="13.68" width="1.52" height="1.52"/><rect x="31.92" y="13.68" width="1.52" height="1.52"/><rect x="0.00" y="15.20" width="1.52" height="1.52"/><rect x="6.08" y="15.20" width="1.52" height="1.52"/><rect x="9.12" y="15.20" width="1.52" height="1.52"/><rect x="10.64" y="15.20" width="1.52" height="1.52"/><rect x="18.24" y="15.20" width="1.52" height="1.52"/><rect x="22.80" y="15.20" width="1.52" height="1.52"/><rect x="24.32" y="15.20" width="1.52" height="1.52"/><rect x="25.84" y="15.20" width="1.52" height="1.52"/><rect x="27.36" y="15.20" width="1.52" height="1.52"/><rect x="30.40" y="15.20" width="1.52" height="1.52"/><rect x="0.00" y="16.72" width="1.52" height="1.52"/><rect x="3.04" y="16.72" width="1.52" height="1.52"/><rect x="4.56" y="16.72" width="1.52" height="1.52"/><rect x="9.12" y="16.72" width="1.52" height="1.52"/><rect x="16.72" y="16.72" width="1.52" height="1.52"/><rect x="18.24" y="16.72" width="1.52" height="1.52"/><rect x="19.76" y="16.72" width="1.52" height="1.52"/><rect x="21.28" y="16.72" width="1.52" height="1.52"/><rect x="24.32" y="16.72" width="1.52" height="1.52"/><rect x="30.40" y="16.72" width="1.52" height="1.52"/><rect x="31.92" y="16.72" width="1.52" height="1.52"/><rect x="0.00" y="18.24" width="1.52" height="1.52"/><rect x="3.04" y="18.24" width="1.52" height="1.52"/><rect x="6.08" y="18.24" width="1.52" height="1.52"/><rect x="7.60" y="18.24" width="1.52" height="1.52"/><rect x="16.72" y="18.24" width="1.52" height="1.52"/><rect x="24.32" y="18.24" width="1.52" height="1.52"/><rect x="0.00" y="19.76" width="1.52" height="1.52"/><rect x="1.52" y="19.76" width="1.52" height="1.52"/><rect x="7.60" y="19.76" width="1.52" height="1.52"/><rect x="9.12" y="19.76" width="1.52" height="1.52"/><rect x="10.64" y="19.76" width="1.52" height="1.52"/><rect x="12.16" y="19.76" width="1.52" height="1.52"/><rect x="13.68" y="19.76" width="1.52" height="1.52"/><rect x="15.20" y="19.76" width="1.52" height="1.52"/><rect x="21.28" y="19.76" width="1.52" height="1.52"/><rect x="25.84" y="19.76" width="1.52" height="1.52"/><rect x="30.40" y="19.76" width="1.52" height="1.52"/><rect x="31.92" y="19.76" width="1.52" height="1.52"/><rect x="0.00" y="21.28" width="1.52" height="1.52"/><rect x="6.08" y="21.28" width="1.52" height="1.52"/><rect x="7.60" y="21.28" width="1.52" height="1.52"/><rect x="10.64" y="21.28" width="1.52" height="1.52"/><rect x="12.16" y="21.28" width="1.52" height="1.52"/><rect x="13.68" y="21.28" width="1.52" height="1.52"/><rect x="16.72" y="21.28" width="1.52" height="1.52"/><rect x="19.76" y="21.28" width="1.52" height="1.52"/><rect x="21.28" y="21.28" width="1.52" height="1.52"/><rect x="22.80" y="21.28" width="1.52" height="1.52"/><rect x="27.36" y="21.28" width="1.52" height="1.52"/><rect x="0.00" y="22.80" width="1.52" height="1.52"/><rect x="1.52" y="22.80" width="1.52" height="1.52"/><rect x="3.04" y="22.80" width="1.52" height="1.52"/><rect x="6.08" y="22.80" width="1.52" height="1.52"/><rect x="7.60" y="22.80" width="1.52" height="1.52"/><rect x="9.12" y="22.80" width="1.52" height="1.52"/><rect x="13.68" y="22.80" width="1.52" height="1.52"/><rect x="15.20" y="22.80" width="1.52" height="1.52"/><rect x="21.28" y="22.80" width="1.52" height="1.52"/><rect x="22.80" y="22.80" width="1.52" height="1.52"/><rect x="25.84" y="22.80" width="1.52" height="1.52"/><rect x="27.36" y="22.80" width="1.52" height="1.52"/><rect x="31.92" y="22.80" width="1.52" height="1.52"/><rect x="0.00" y="24.32" width="1.52" height="1.52"/><rect x="3.04" y="24.32" width="1.52" height="1.52"/><rect x="6.08" y="24.32" width="1.52" height="1.52"/><rect x="7.60" y="24.32" width="1.52" height="1.52"/><rect x="12.16" y="24.32" width="1.52" height="1.52"/><rect x="13.68" y="24.32" width="1.52" height="1.52"/><rect x="16.72" y="24.32" width="1.52" height="1.52"/><rect x="18.24" y="24.32" width="1.52" height="1.52"/><rect x="19.76" y="24.32" width="1.52" height="1.52"/><rect x="21.28" y="24.32" width="1.52" height="1.52"/><rect x="22.80" y="24.32" width="1.52" height="1.52"/><rect x="24.32" y="24.32" width="1.52" height="1.52"/><rect x="25.84" y="24.32" width="1.52" height="1.52"/><rect x="28.88" y="24.32" width="1.52" height="1.52"/><rect x="0.00" y="25.84" width="1.52" height="1.52"/><rect x="1.52" y="25.84" width="1.52" height="1.52"/><rect x="3.04" y="25.84" width="1.52" height="1.52"/><rect x="4.56" y="25.84" width="1.52" height="1.52"/><rect x="9.12" y="25.84" width="1.52" height="1.52"/><rect x="13.68" y="25.84" width="1.52" height="1.52"/><rect x="16.72" y="25.84" width="1.52" height="1.52"/><rect x="21.28" y="25.84" width="1.52" height="1.52"/><rect x="27.36" y="25.84" width="1.52" height="1.52"/><rect x="31.92" y="25.84" width="1.52" height="1.52"/><rect x="0.00" y="27.36" width="1.52" height="1.52"/><rect x="1.52" y="27.36" width="1.52" height="1.52"/><rect x="3.04" y="27.36" width="1.52" height="1.52"/><rect x="4.56" y="27.36" width="1.52" height="1.52"/><rect x="6.08" y="27.36" width="1.52" height="1.52"/><rect x="9.12" y="27.36" width="1.52" height="1.52"/><rect x="10.64" y="27.36" width="1.52" height="1.52"/><rect x="12.16" y="27.36" width="1.52" height="1.52"/><rect x="18.24" y="27.36" width="1.52" height="1.52"/><rect x="19.76" y="27.36" width="1.52" height="1.52"/><rect x="21.28" y="27.36" width="1.52" height="1.52"/><rect x="22.80" y="27.36" width="1.52" height="1.52"/><rect x="24.32" y="27.36" width="1.52" height="1.52"/><rect x="25.84" y="27.36" width="1.52" height="1.52"/><rect x="27.36" y="27.36" width="1.52" height="1.52"/><rect x="0.00" y="28.88" width="1.52" height="1.52"/><rect x="3.04" y="28.88" width="1.52" height="1.52"/><rect x="4.56" y="28.88" width="1.52" height="1.52"/><rect x="6.08" y="28.88" width="1.52" height="1.52"/><rect x="7.60" y="28.88" width="1.52" height="1.52"/><rect x="12.16" y="28.88" width="1.52" height="1.52"/><rect x="15.20" y="28.88" width="1.52" height="1.52"/><rect x="16.72" y="28.88" width="1.52" height="1.52"/><rect x="18.24" y="28.88" width="1.52" height="1.52"/><rect x="19.76" y="28.88" width="1.52" height="1.52"/><rect x="21.28" y="28.88" width="1.52" height="1.52"/><rect x="22.80" y="28.88" width="1.52" height="1.52"/><rect x="24.32" y="28.88" width="1.52" height="1.52"/><rect x="25.84" y="28.88" width="1.52" height="1.52"/><rect x="31.92" y="28.88" width="1.52" height="1.52"/><rect x="0.00" y="30.40" width="1.52" height="1.52"/><rect x="3.04" y="30.40" width="1.52" height="1.52"/><rect x="4.56" y="30.40" width="1.52" height="1.52"/><rect x="7.60" y="30.40" width="1.52" height="1.52"/><rect x="12.16" y="30.40" width="1.52" height="1.52"/><rect x="21.28" y="30.40" width="1.52" height="1.52"/><rect x="0.00" y="31.92" width="1.52" height="1.52"/><rect x="1.52" y="31.92" width="1.52" height="1.52"/><rect x="3.04" y="31.92" width="1.52" height="1.52"/><rect x="4.56" y="31.92" width="1.52" height="1.52"/><rect x="6.08" y="31.92" width="1.52" height="1.52"/><rect x="7.60" y="31.92" width="1.52" height="1.52"/><rect x="9.12" y="31.92" width="1.52" height="1.52"/><rect x="10.64" y="31.92" width="1.52" height="1.52"/><rect x="12.16" y="31.92" width="1.52" height="1.52"/><rect x="13.68" y="31.92" width="1.52" height="1.52"/><rect x="15.20" y="31.92" width="1.52" height="1.52"/><rect x="16.72" y="31.92" width="1.52" height="1.52"/><rect x="18.24" y="31.92" width="1.52" height="1.52"/><rect x="19.76" y="31.92" width="1.52" height="1.52"/><rect x="21.28" y="31.92" width="1.52" height="1.52"/><rect x="22.80" y="31.92" width="1.52" height="1.52"/><rect x="24.32" y="31.92" width="1.52" height="1.52"/><rect x="25.84" y="31.92" width="1.52" height="1.52"/><rect x="27.36" y="31.92" width="1.52" height="1.52"/><rect x="28.88" y="31.92" width="1.52" height="1.52"/><rect x="30.40" y="31.92" width="1.52" height="1.52"/><rect x="31.92" y="31.92" width="1.52" height="1.52"/></g>
</svg>
</body></html>
